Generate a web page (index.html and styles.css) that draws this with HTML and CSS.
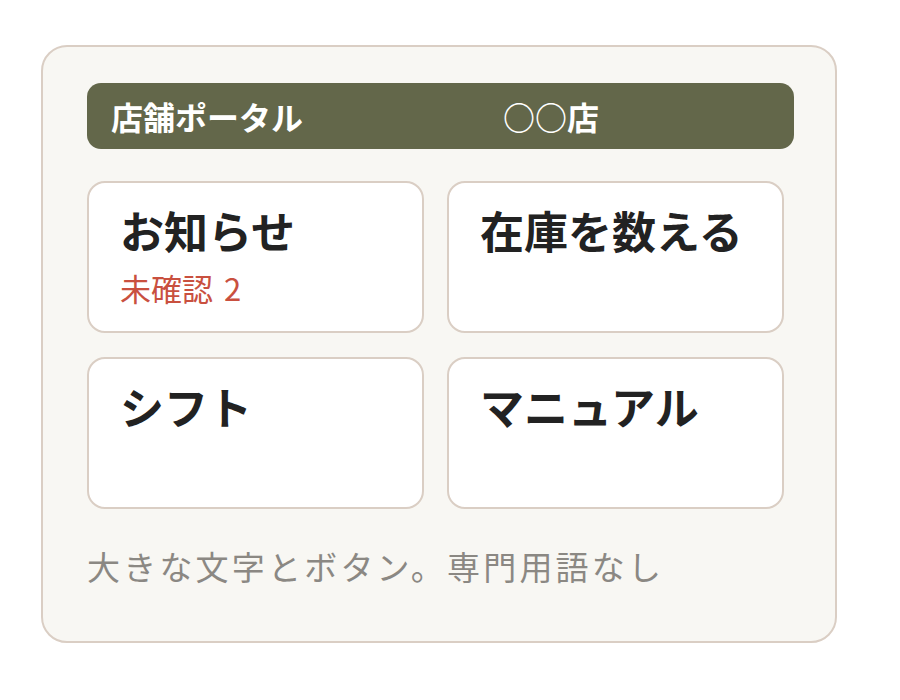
FILE: index.html
```html
<!DOCTYPE html>
<html lang="ja">
<head>
    <meta charset="UTF-8">
    <title>店舗ポータル</title>
    <link rel="stylesheet" href="styles.css">
</head>
<body>
    <div class="page">
        <div class="portal">
            <div class="portal-header">
                <span class="portal-title">店舗ポータル</span>
                <span class="store-name">○○店</span>
            </div>
            <div class="menu-grid">
                <div class="menu-tile">
                    <div class="tile-title">お知らせ</div>
                    <div class="tile-note">未確認 2</div>
                </div>
                <div class="menu-tile">
                    <div class="tile-title">在庫を数える</div>
                </div>
                <div class="menu-tile">
                    <div class="tile-title">シフト</div>
                </div>
                <div class="menu-tile">
                    <div class="tile-title">マニュアル</div>
                </div>
            </div>
            <div class="portal-note">大きな文字とボタン。専門用語なし</div>
        </div>
    </div>
</body>
</html>
```

FILE: styles.css
```css
body {
    margin: 0;
    background: #ffffff;
    font-family: "Noto Sans CJK JP", "Noto Sans", sans-serif;
}

.page {
    padding: 45px 0 0 41px;
}

.portal {
    box-sizing: border-box;
    width: 796px;
    height: 598px;
    padding: 36px 41px 0 44px;
    background: #f8f7f3;
    border: 2px solid #dacec4;
    border-radius: 26px;
}

.portal-header {
    display: flex;
    align-items: center;
    gap: 200px;
    height: 66px;
    padding: 0 24px;
    background: #63674a;
    border-radius: 14px;
    color: #ffffff;
    font-size: 32px;
    font-weight: 700;
    line-height: 1;
}

.menu-grid {
    display: grid;
    grid-template-columns: 337px 337px;
    grid-auto-rows: 152px;
    gap: 24px 23px;
    margin-top: 32px;
}

.menu-tile {
    box-sizing: border-box;
    padding: 21px 31px;
    background: #ffffff;
    border: 2px solid #dacec4;
    border-radius: 18px;
}

.tile-title {
    font-size: 44px;
    font-weight: 700;
    line-height: 1.2;
    color: #222222;
}

.tile-note {
    margin-top: 12px;
    font-size: 31px;
    line-height: 1.2;
    color: #c9503f;
    word-spacing: 4px;
}

.portal-note {
    margin-top: 34px;
    font-size: 33px;
    letter-spacing: 3.2px;
    line-height: 1.4;
    color: #8b8883;
}
```
